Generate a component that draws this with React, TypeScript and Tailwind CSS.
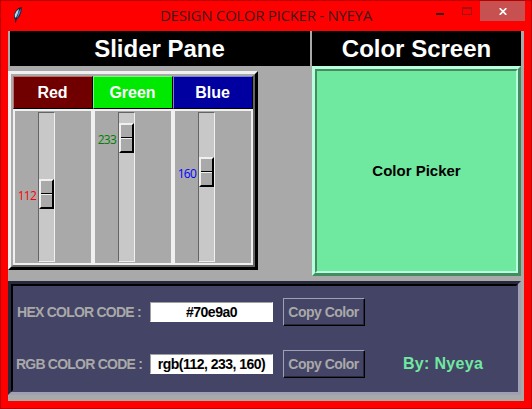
import React from "react";

type Channel = {
  name: string;
  value: number;
  label: string;
  text: string;
  offset: string;
};

const channels: Channel[] = [
  {
    name: "Red",
    value: 112,
    label: "bg-[#700000] border-t-[#b87070] border-l-[#b87070] border-r-black border-b-black",
    text: "text-[#ff0000]",
    offset: "pt-[66px]",
  },
  {
    name: "Green",
    value: 233,
    label: "bg-[#00e900] border-t-[#80f480] border-l-[#80f480] border-r-black border-b-black",
    text: "text-[#008000]",
    offset: "pt-[10px]",
  },
  {
    name: "Blue",
    value: 160,
    label: "bg-[#0000a0] border-t-[#8080d0] border-l-[#8080d0] border-r-black border-b-black",
    text: "text-[#0000ff]",
    offset: "pt-[44px]",
  },
];

function Feather() {
  return (
    <svg width="10" height="16" viewBox="0 0 10 16">
      <path d="M2 15.5L2.2 12.5L1 11V7.5L3 3.5L5.5 1L8.8 0L8.4 5L6.5 9.5L3.6 12.8L3 15.5Z" fill="#152434" />
      <path d="M1.8 10.5V7.5L3.6 4L6 2L5 6L3 10.5Z" fill="#b4dcec" />
      <path d="M7.8 1.2L7.4 5L5.6 9L3.6 11.5L5.4 6Z" fill="#4a86d8" />
    </svg>
  );
}

function TitleBar() {
  return (
    <header className="flex h-[30px] shrink-0 items-start">
      <div className="w-[159px] pt-[6px] pl-[12px]">
        <Feather />
      </div>
      <h1 className="w-[250px] pt-[4px] font-['Open_Sans',sans-serif] text-[15px] leading-[20px] tracking-[-0.28px] whitespace-nowrap text-[#3b1c1c]">
        DESIGN COLOR PICKER - NYEYA
      </h1>
      <div className="ml-auto flex pr-[6px]">
        <div className="w-[26px] pt-[12px]">
          <div className="h-[2px] w-[8px] bg-[#3b1c1c]" />
        </div>
        <div className="w-[18px] pt-[6px]">
          <div className="h-[8px] w-[10px] border border-t-2 border-[#a01414]" />
        </div>
        <div className="flex h-[20px] w-[45px] items-center justify-center bg-[#c75050]">
          <svg width="8" height="7" viewBox="0 0 8 7">
            <path d="M0.7 0.2L7.3 6.8M7.3 0.2L0.7 6.8" stroke="#fff" strokeWidth="1.7" />
          </svg>
        </div>
      </div>
    </header>
  );
}

function Scale({ channel }: { channel: Channel }) {
  return (
    <div className="flex w-[80px] flex-col">
      <div
        className={`flex h-[33px] items-center justify-center border pr-px text-[16px] font-bold text-white ${channel.label}`}
      >
        {channel.name}
      </div>
      <div className="flex h-[156px] border-2 border-[#f0f0f0] bg-[#a9a9a9] pt-px">
        <div className={`w-[23px] ${channel.offset}`}>
          <div
            className={`mt-[11px] pr-[2px] text-right font-['Open_Sans',sans-serif] text-[12px] leading-[14px] tracking-[-0.75px] ${channel.text}`}
          >
            {channel.value}
          </div>
        </div>
        <div
          className={`h-[150px] w-[17px] border border-t-[#656565] border-r-[#f0f0f0] border-b-[#f0f0f0] border-l-[#656565] bg-[#c8c8c8] ${channel.offset}`}
        >
          <div className="flex h-[30px] w-[15px] flex-col border-2 border-t-[#f0f0f0] border-r-black border-b-black border-l-[#f0f0f0] bg-[#a9a9a9]">
            <div className="mt-[12px] h-px bg-black" />
            <div className="h-px bg-[#f0f0f0]" />
          </div>
        </div>
      </div>
    </div>
  );
}

function CodeRow({ label, value, children }: { label: string; value: string; children?: React.ReactNode }) {
  return (
    <div className="flex h-[28px] items-center">
      <div className="w-[132px] text-center text-[14px] font-bold tracking-[-0.77px] whitespace-nowrap text-[#a9a9a9]">
        {label}
      </div>
      <div className="ml-[5px] flex h-[20px] w-[123px] items-center justify-center border border-t-[#a0a0a0] border-r-white border-b-white border-l-[#a0a0a0] bg-white text-[14px] font-bold tracking-[-0.51px] whitespace-nowrap text-black">
        {value}
      </div>
      <button className="ml-[10px] h-[28px] w-[82px] border border-t-[#a09fb4] border-r-black border-b-black border-l-[#a09fb4] text-[14px] font-bold tracking-[-0.5px] whitespace-nowrap text-[#a9a9a9]">
        <span className="flex h-full w-full items-center justify-center border-r border-b border-[#29293d] pt-[2px]">
          Copy Color
        </span>
      </button>
      {children}
    </div>
  );
}

export default function App() {
  return (
    <div className="flex h-[409px] w-[532px] flex-col overflow-hidden border border-[#b80000] bg-[#ff0000] font-['Liberation_Sans',Arial,sans-serif]">
      <TitleBar />
      <main className="ml-[7px] flex h-[370px] w-[516px] shrink-0 flex-col bg-[#a9a9a9]">
        <div className="flex h-[245px]">
          <section className="w-[304px]">
            <h2 className="ml-[2px] flex h-[35px] w-[300px] items-center justify-center bg-black pr-px text-[24px] font-bold text-white">
              Slider Pane
            </h2>
            <div className="mt-[5px] h-[199px] w-[250px] border-[3px] border-t-[#f0f0f0] border-r-black border-b-black border-l-[#f0f0f0]">
              <div className="flex h-full border-2 border-t-[#a9a9a9] border-r-[#656565] border-b-[#656565] border-l-[#a9a9a9]">
                {channels.map((channel) => (
                  <Scale key={channel.name} channel={channel} />
                ))}
              </div>
            </div>
          </section>
          <section className="w-[209px]">
            <h2 className="flex h-[35px] items-center justify-center bg-black text-[24px] font-bold text-white">
              Color Screen
            </h2>
            <div className="h-[210px] border-[3px] border-t-[#b8ffe0] border-r-[#438c60] border-b-[#438c60] border-l-[#b8ffe0]">
              <div className="flex h-full items-center justify-center border-2 border-t-[#438c60] border-r-[#b8ffe0] border-b-[#b8ffe0] border-l-[#438c60] bg-[#70e9a0] text-[15px] font-bold text-black">
                Color Picker
              </div>
            </div>
          </section>
        </div>
        <section className="mt-[5px] h-[114px] w-[513px] border-[3px] border-t-[#29293d] border-r-[#a09fb4] border-b-[#a09fb4] border-l-[#29293d] bg-[#444466]">
          <div className="flex h-full flex-col gap-[24px] border-2 border-t-black border-r-[#444466] border-b-[#444466] border-l-black pt-[12px]">
            <CodeRow label="HEX COLOR CODE :" value="#70e9a0" />
            <CodeRow label="RGB COLOR CODE :" value="rgb(112, 233, 160)">
              <div className="ml-[38px] text-[16px] font-bold tracking-[0.3px] whitespace-nowrap text-[#70e9a0]">By: Nyeya</div>
            </CodeRow>
          </div>
        </section>
      </main>
    </div>
  );
}
